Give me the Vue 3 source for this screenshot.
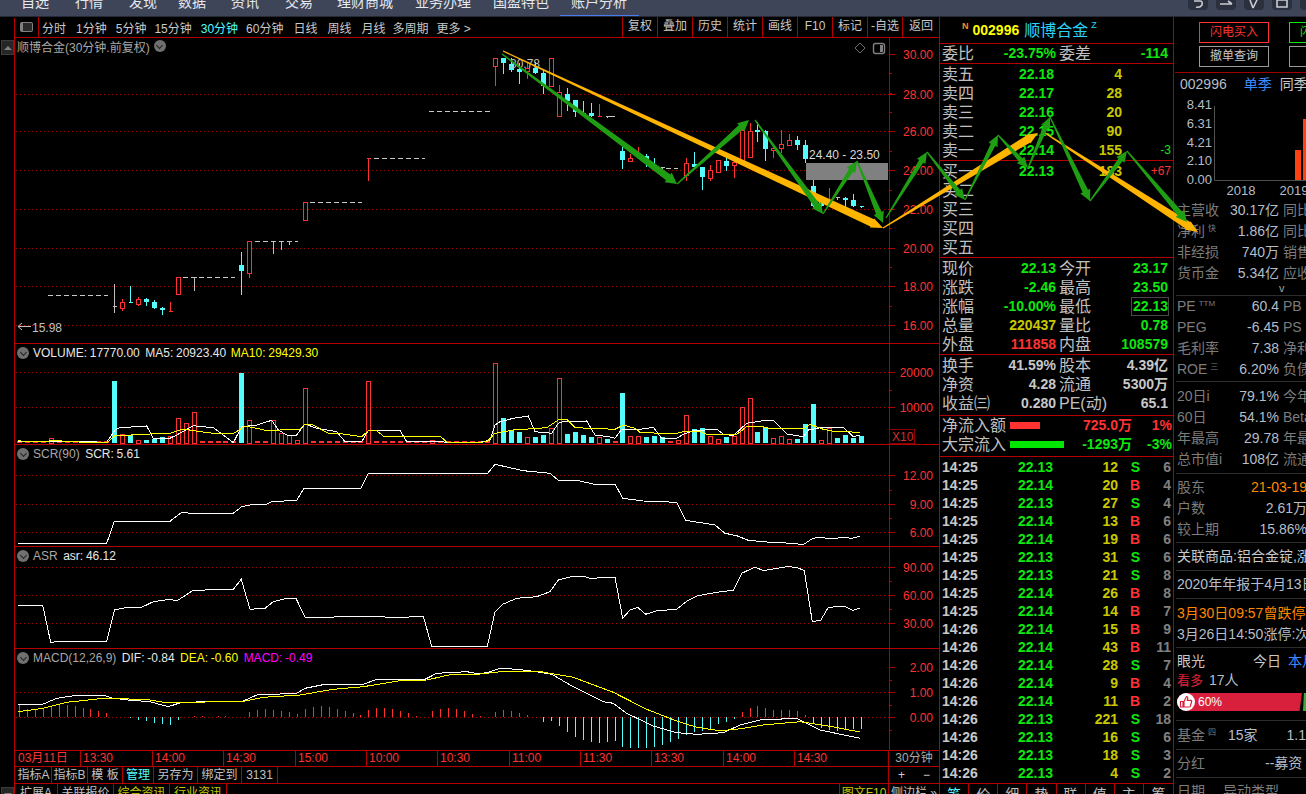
<script setup>
const DX = 7.94
const xAt = (i) => Math.round(114.3 + DX * i) + 0.5
const pts = (arr, ox, oy) => {
  let s = ''
  for (let k = 0; k < arr.length; k += 2) s += (ox + arr[k] / 3).toFixed(1) + ',' + (oy + arr[k + 1] / 3).toFixed(1) + ' '
  return s
}

const nav = [['自选',21],['行情',26],['发现',26],['数据',21],['资讯',25],['交易',26],['理财商城',24],['业务办理',22],['国盈特色',22],['账户分析',22]]
const tools = [['分时',3],['1分钟',10],['5分钟',9],['15分钟',8],['30分钟',9],['60分钟',8],['日线',10],['周线',10],['月线',10],['多周期',7],['更多 >',8]]
const toolRight = ['复权','叠加','历史','统计','画线','F10','标记','-自选','返回']

/* candles: index, type, high, low, top, bottom */
const candles = [
  [0,'g',284,312,306,306],[1,'r',299,310,302,308],[2,'c',286,302,302,302],[3,'r',297,305,299,304],[4,'c',298,305,299,302],[5,'c',300,308,302,308],[6,'c',307,314,308,310],[7,'r',302,311,311,311],
  [8,'r',277,294,277,294],[10,'g',277,290,277,277],[16,'c',252,294,265,271],[17,'r',241,277,241,273],[20,'g',241,253,241,241],[21,'g',241,249,241,241],[22,'g',241,244,241,241],[24,'r',202,220,202,220],[32,'r',158,180,158,158],
  [48,'r',58,85,58,66],[49,'c',58,73,58,63],[50,'c',58,71,64,70],[51,'c',63,83,69,72],[52,'r',63,78,68,71],[53,'c',62,73,68,73],[54,'c',70,93,73,86],[55,'r',58,86,58,86],[56,'r',85,116,92,116],[57,'c',88,110,94,101],[58,'c',100,116,100,112],[59,'c',101,115,113,113],[60,'c',103,116,113,116],[61,'r',104,116,116,116],[62,'g',116,117,116,116],
  [64,'c',147,168,151,160],[65,'r',154,161,158,161],[66,'r',147,157,157,157],[67,'c',154,166,156,159],[68,'c',158,168,167,167],[69,'g',167,168,167,167],[72,'r',158,180,163,175],[73,'c',152,167,164,167],[74,'c',167,189,167,177],[75,'r',165,180,170,178],[76,'r',160,172,160,172],[77,'c',157,170,161,166],[78,'r',162,177,162,165],[79,'r',128,160,130,160],[80,'r',123,157,131,157],[81,'c',122,141,130,132],[82,'c',130,160,131,149],[83,'r',147,157,148,150],[84,'r',130,152,144,148],[85,'r',134,145,140,145],[86,'c',136,149,140,145],[87,'c',140,162,145,159],[88,'c',180,206,186,206],[89,'c',198,206,200,206],[90,'r',188,200,200,200],[91,'g',197,199,197,197],[92,'c',197,206,198,200],[93,'c',194,206,200,206],[94,'c',206,207,206,206]
]
const candleColor = { r: '#ff3232', c: '#54fcfc', g: '#c0c0c0' }
const dashes = [[48,108,295.5],[183,235,277.5],[255,298,241.5],[310,362,202.5],[374,425,158.5],[429,490,111.5],[610,616,116.5],[666,678,168.5]]

const vol = [0,0,0,0,295,0,0,0,0,0,0,0,-123,283,-285,300,-300,-296,-291,288,235,250,217,0,0,0,0,0,-99,241,0,0,240,280,285,300,145,0,0,0,0,0,0,0,124,0,0,0,0,0,0,0,300,0,0,0,0,0,0,0,70,-235,-270,-277,292,-292,-285,264,115,-283,-277,-285,-292,290,-297,0,-160,287,289,-292,-288,-290,0,301,226,-268,-264,289,298,-291,289,202,175,-276,-262,295,289,298,-297,-253,-192,301,263,-294,-285,-294,-288]
const volBars = vol.map((v, k) => ({ x: xAt(k - 12), low: v === 0, cyan: v < 0, top: Math.round(340 + Math.abs(v) / 3) + 0.5 }))
const volW = pts([54,305,150,304,260,305,320,307,345,270,360,263,440,258,460,295,510,295,530,285,580,257,640,263,670,285,700,308,725,260,770,255,815,241,835,270,860,285,890,285,915,252,950,265,1010,275,1035,305,1085,305,1105,271,1200,271,1220,305,1330,305,1340,308,1440,308],0,340) + pts([0,307,30,300,45,255,60,245,100,235,145,228,165,275,215,280,235,250,250,245,320,243,345,285,385,290,405,295,425,268,480,268,520,262,545,295,590,295,610,283,640,272,710,268,730,282,760,287,800,250,860,240,880,241,920,282,970,290,985,270,1030,262,1090,262,1120,290,1140,285],480,340)
const volY = pts([54,300,70,305,180,302,200,305,320,308,345,287,440,283,470,280,510,280,550,267,600,275,650,281,700,281,735,258,770,265,800,272,840,270,900,268,915,253,940,255,985,280,1030,282,1085,290,1105,272,1130,272,1150,288,1320,288,1340,306,1440,308],0,340) + pts([0,307,20,305,45,280,100,270,200,263,235,240,260,238,285,263,405,268,430,255,465,265,480,277,580,282,610,275,660,275,680,283,770,283,800,260,850,260,870,266,970,267,990,253,1030,268,1060,274,1140,277],480,340)

const scr = pts([54,310,320,310,343,244,510,244,545,217,570,220,700,220,725,200,760,193,800,193,815,185,890,181,912,145,1083,145,1104,101,1440,101],0,440) + pts([0,101,22,101,45,73,130,92,210,100,235,121,290,121,340,132,405,132,428,175,490,183,590,187,617,241,705,255,735,280,770,287,805,301,870,307,940,310,970,314,995,297,1010,292,1060,296,1090,292,1115,295,1140,289],480,440)
const asr = pts([54,496,128,496,152,607,185,604,320,604,344,509,385,502,425,502,460,485,510,478,530,483,580,451,700,448,724,418,750,508,795,505,820,485,860,475,888,475,915,532,1095,530,1210,532,1270,529,1295,619,1440,619],0,440) + pts([0,619,22,619,45,515,70,492,110,475,170,470,210,455,235,420,280,409,310,409,330,415,405,412,428,535,450,510,473,502,497,523,530,512,590,508,620,484,650,468,710,457,760,451,785,400,825,381,850,392,920,380,950,382,973,392,997,545,1022,541,1045,502,1095,499,1118,511,1140,505],480,440)
const macdW = pts([54,165,130,162,170,145,235,135,310,135,340,145,385,150,450,155,505,170,545,157,730,153,770,135,890,130,915,115,975,103,1085,105,1130,88,1275,88,1310,70,1400,65,1440,72],0,650) + pts([0,72,30,65,60,55,110,58,170,65,215,73,280,110,370,155,400,160,440,190,520,228,590,248,650,253,730,248,780,225,840,210,950,205,1020,240,1140,265],480,650)
const macdY = pts([54,185,130,175,200,157,320,144,450,150,500,158,730,154,790,142,900,135,1000,118,1090,110,1200,92,1280,90,1360,72,1440,72],0,650) + pts([0,72,80,63,170,63,280,82,400,127,500,178,590,213,650,232,720,242,770,238,850,225,960,215,1040,227,1140,246],480,650)
const macd = [165,176,178,178,172,165,165,168,175,178,183,190,201,201,205,210,214,219,222,225,210,201,199,199,200,199,199,200,200,186,180,178,180,184,186,192,176,170,168,172,178,184,190,195,180,174,174,178,182,190,198,200,183,177,175,178,184,192,198,200,186,180,183,189,196,200,215,213,228,246,261,270,275,278,276,274,290,293,293,293,290,285,275,267,255,246,243,238,222,215,207,186,175,168,173,180,180,180,184,196,222,235,240,242,238,238,236]
const macdBars = macd.map((v, k) => ({ x: xAt(k - 12), y: 650 + v / 3, neg: v > 202 }))

const axisMain = [['30.00',54],['28.00',94],['26.00',131],['24.00',170],['22.00',209],['20.00',248],['18.00',286],['16.00',325]]
const gridMain = [94,131,170,209,248,286,325]
const minor = (a, b, n) => Array.from({ length: n }, (_, k) => Math.round(a + (b - a) * k / (n - 1)))

const dates = [['03月11日',66],['13:30',72],['14:00',71],['14:30',72],['15:00',71],['10:00',71],['10:30',72],['11:00',71],['11:30',71],['13:30',72],['14:00',71],['14:30',94]]
const cmds = [['指标A',36],['指标B',36],['模 板',35],['管理',31,'cy'],['另存为',44],['绑定到',44],['3131',36]]
const tabsLeft = [['扩展A',43],['关联报价',56],['综合资讯',56,'ye'],['行业资讯',57,'ye']]
const quoteTabs = ['笔','价','细','势','联','值','主','筹']

const asks = [['卖五','22.18','4'],['卖四','22.17','28'],['卖三','22.16','20'],['卖二','22.15','90'],['卖一','22.14','155','-3','gr']]
const bids = [['买一','22.13','183','+67','re'],['买二'],['买三'],['买四'],['买五']]
const stat1 = [['现价','22.13','gr','今开','23.17','gr'],['涨跌','-2.46','gr','最高','23.50','gr'],['涨幅','-10.00%','gr','最低','22.13','gr boxed'],['总量','220437','ye','量比','0.78','gr'],['外盘','111858','re','内盘','108579','gr']]
const stat2 = [['换手','41.59%','股本','4.39亿'],['净资','4.28','流通','5300万'],['收益㈢','0.280','PE(动)','65.1']]
const ticks = [['14:25','22.13',12,'S',6],['14:25','22.14',20,'B',4],['14:25','22.13',27,'S',4],['14:25','22.14',13,'B',6],['14:25','22.14',19,'B',6],['14:25','22.13',31,'S',6],['14:25','22.13',21,'S',8],['14:25','22.14',26,'B',8],['14:25','22.14',14,'B',7],['14:26','22.14',15,'B',9],['14:26','22.14',43,'B',11],['14:26','22.14',28,'S',7],['14:26','22.14',9,'B',4],['14:26','22.14',11,'B',2],['14:26','22.13',221,'S',18],['14:26','22.13',16,'S',6],['14:26','22.13',18,'S',3],['14:26','22.13',4,'S',2]]

const fin1 = [['主营收','','30.17亿','同比'],['净利','快','1.86亿','同比'],['非经损','','740万','销售'],['货币金','','5.34亿','应收']]
const fin2 = [['PE','TTM','60.4','PB'],['PEG','','-6.45','PS'],['毛利率','','7.38','净利'],['ROE','三','6.20%','负债']]
const fin3 = [['20日i','','79.1%','今年'],['60日','','54.1%','Beta'],['年最高','','29.78','年最'],['总市值i','','108亿','流通']]

const headW = (x1, y1, x2, y2, w, L = 11, b = 2.5) => {
  const len = Math.hypot(x2 - x1, y2 - y1), ux = (x2 - x1) / len, uy = (y2 - y1) / len, nx = -uy, ny = ux
  const nk = [x2 - ux * L, y2 - uy * L]
  const p = (c, s) => (c[0] + nx * s).toFixed(1) + ',' + (c[1] + ny * s).toFixed(1)
  return [p([x1, y1], 0.6), p(nk, w / 2), p(nk, w / 2 + b), x2.toFixed(1) + ',' + y2.toFixed(1), p(nk, -w / 2 - b), p(nk, -w / 2), p([x1, y1], -0.6)].join(' ')
}
const yellowArrows = [[503,51,883,228,8],[883,228,1038,133,8],[1045,133,1198,232,8]].map((a) => headW(...a, 12, 1))
const greenArrows = [[502,54,677,184,7],[677,184,749,120,6],[755,120,823,214,6],[823,214,857,161,5],[857,161,883,223,6],[886,218,927,152,5],[927,152,965,200,5],[965,200,998,135,5],[998,135,1028,168,5],[1028,168,1050,117,5],[1050,117,1090,201,6],[1090,201,1127,151,5],[1127,151,1187,222,6]].map((a) => headW(...a))
</script>

<template>
  <div class="app">
    <header class="topbar">
      <nav class="nav">
        <span v-for="(n, k) in nav" :key="k" class="nav-item" :class="{ active: k === 9 }" :style="{ marginLeft: n[1] + 'px' }">{{ n[0] }}</span>
      </nav>
      <div class="win-icons">
        <span class="win-btn"><svg width="14" height="10" viewBox="0 0 14 10"><path d="M3 1 H9 Q12 1 11 5 Q9 8 5 7" fill="none" stroke="#c8ccd4" stroke-width="1.6"/></svg></span>
        <span class="win-btn"><svg width="14" height="10" viewBox="0 0 14 10"><path d="M1 4 H13 M9 1 L13 4" fill="none" stroke="#c8ccd4" stroke-width="1.6"/></svg></span>
        <span class="win-btn"><svg width="14" height="10" viewBox="0 0 14 10"><path d="M3 0 L6 8 M10 0 L6 8" fill="none" stroke="#c8ccd4" stroke-width="1.6"/></svg></span>
        <span class="win-btn"><svg width="14" height="10" viewBox="0 0 14 10"><path d="M2 0 H12 V7 H2 Z" fill="none" stroke="#c8ccd4" stroke-width="1.6"/></svg></span>
        <span class="win-btn"></span>
      </div>
    </header>

    <main class="main">
      <section class="chartcol">
        <aside class="rail">
          <span class="rail-btn"><i class="tri up"></i></span>
          <span class="rail-btn"><i class="tri down"></i></span>
        </aside>
        <div class="work">
          <div class="tools">
            <span class="toggle"><i></i></span>
            <span v-for="(t, k) in tools" :key="k" class="tool" :class="{ on: k === 4 }" :style="{ marginLeft: t[1] + 'px' }">{{ t[0] }}</span>
            <div class="tool-right">
              <span v-for="t in toolRight" :key="t">{{ t }}</span>
            </div>
          </div>

          <div class="pane p-main">
            <div class="legend main-legend"><span class="grey">顺博合金(30分钟.前复权)</span><i class="chev"></i></div>
            <svg class="plot" width="924" height="305" viewBox="15 38 924 305">
              <g class="crisp">
                <line v-for="y in gridMain" :key="y" x1="16" x2="889" :y1="y + .5" :y2="y + .5" class="dot"/>
                <line x1="889.5" x2="889.5" y1="38" y2="343" class="red"/>
                <line v-for="y in minor(54, 325, 15)" :key="y" x1="889" x2="892" :y1="y + .5" :y2="y + .5" class="red"/>
                <line v-for="a in axisMain" :key="a[0]" x1="889" x2="895" :y1="a[1] + .5" :y2="a[1] + .5" class="red"/>
                <line v-for="(d, k) in dashes" :key="k" :x1="d[0]" :x2="d[1]" :y1="d[2]" :y2="d[2]" class="dash"/>
                <g v-for="(c, k) in candles" :key="k">
                  <line :x1="xAt(c[0])" :x2="xAt(c[0])" :y1="c[2]" :y2="c[3] + 1" :stroke="candleColor[c[1]]"/>
                  <line v-if="c[4] === c[5]" :x1="xAt(c[0]) - 2" :x2="xAt(c[0]) + 2.5" :y1="c[4] + .5" :y2="c[4] + .5" :stroke="candleColor[c[1]]"/>
                  <rect v-else-if="c[1] === 'c'" :x="xAt(c[0]) - 2.5" :y="c[4]" width="5" :height="c[5] - c[4]" fill="#54fcfc"/>
                  <rect v-else :x="xAt(c[0]) - 2" :y="c[4] + .5" width="4" :height="c[5] - c[4]" fill="#000" stroke="#ff3232"/>
                </g>
                <rect x="806" y="163" width="82" height="17" fill="#808080"/>
              </g>
              <text x="809" y="159" class="t-note">24.40 - 23.50</text>
              <text x="510" y="68" class="t-dim">30.78</text>
              <path d="M31 326.5 H18 M22 323 L18 326.5 L22 330" fill="none" stroke="#c0c0c0"/>
              <text x="32" y="332" class="t-dim">15.98</text>
              <path d="M860 43 L865 48 L860 53 L855 48 Z" fill="none" stroke="#707070"/>
              <rect x="873.5" y="43.5" width="11" height="10" rx="2" fill="none" stroke="#808080" stroke-width="1.4"/>
              <rect x="880" y="45" width="3" height="7" fill="#808080"/>
              <text v-for="a in axisMain" :key="a[0]" x="933" :y="a[1] + 4.5" class="t-axis">{{ a[0] }}</text>
            </svg>
          </div>

          <div class="pane p-vol">
            <div class="legend"><i class="chev"></i><span class="white">VOLUME: 17770.00&nbsp; MA5: 20923.40&nbsp;</span><span class="yel ma10">MA10: 29429.30</span></div>
            <svg class="plot" width="924" height="100" viewBox="15 344 924 100">
              <g class="crisp">
                <line v-for="y in [372, 407]" :key="y" x1="16" x2="889" :y1="y + .5" :y2="y + .5" class="dot"/>
                <line x1="889.5" x2="889.5" y1="344" y2="444" class="red"/>
                <line v-for="y in [372, 407]" :key="'t' + y" x1="889" x2="895" :y1="y + .5" :y2="y + .5" class="red"/>
                <line x1="889" x2="892" y1="390.5" y2="390.5" class="red"/>
                <rect x="889.5" y="429.5" width="25" height="14" fill="none" stroke="#8a0000"/>
                <template v-for="(b, k) in volBars" :key="k">
                  <rect v-if="b.low" :x="b.x - 2.5" y="441" width="5" height="2" fill="#ff3232"/>
                  <rect v-else-if="b.cyan" :x="b.x - 2.5" :y="b.top - .5" width="5" :height="443 - b.top" fill="#54fcfc"/>
                  <rect v-else :x="b.x - 2" :y="b.top" width="4" :height="443 - b.top" fill="#000" stroke="#ff3232"/>
                </template>
              </g>
              <polyline :points="volW" class="ln-w"/>
              <polyline :points="volY" class="ln-y"/>
              <text x="933" y="377" class="t-axis">20000</text>
              <text x="933" y="412" class="t-axis">10000</text>
              <text x="892" y="441" class="t-x10">X10</text>
            </svg>
          </div>

          <div class="pane p-ind">
            <div class="legend"><i class="chev"></i><span class="grey">SCR(90)&nbsp; </span><span class="white">SCR: 5.61</span></div>
            <svg class="plot" width="924" height="101" viewBox="15 445 924 101">
              <g class="crisp">
                <line v-for="y in [475, 504, 532]" :key="y" x1="16" x2="889" :y1="y + .5" :y2="y + .5" class="dot"/>
                <line x1="889.5" x2="889.5" y1="445" y2="546" class="red"/>
                <line v-for="y in [475, 504, 532]" :key="'t' + y" x1="889" x2="895" :y1="y + .5" :y2="y + .5" class="red"/>
                <line v-for="y in [490, 518]" :key="'m' + y" x1="889" x2="892" :y1="y + .5" :y2="y + .5" class="red"/>
              </g>
              <polyline :points="scr" class="ln-w"/>
              <text x="933" y="480" class="t-axis">12.00</text>
              <text x="933" y="509" class="t-axis">9.00</text>
              <text x="933" y="537" class="t-axis">6.00</text>
            </svg>
          </div>

          <div class="pane p-ind">
            <div class="legend"><i class="chev"></i><span class="grey">ASR&nbsp; </span><span class="white">asr: 46.12</span></div>
            <svg class="plot" width="924" height="101" viewBox="15 547 924 101">
              <g class="crisp">
                <line v-for="y in [567, 595, 623]" :key="y" x1="16" x2="889" :y1="y + .5" :y2="y + .5" class="dot"/>
                <line x1="889.5" x2="889.5" y1="547" y2="648" class="red"/>
                <line v-for="y in [567, 595, 623]" :key="'t' + y" x1="889" x2="895" :y1="y + .5" :y2="y + .5" class="red"/>
                <line v-for="y in [581, 609]" :key="'m' + y" x1="889" x2="892" :y1="y + .5" :y2="y + .5" class="red"/>
              </g>
              <polyline :points="asr" class="ln-w"/>
              <text x="933" y="572" class="t-axis">90.00</text>
              <text x="933" y="600" class="t-axis">60.00</text>
              <text x="933" y="628" class="t-axis">30.00</text>
            </svg>
          </div>

          <div class="pane p-ind">
            <div class="legend"><i class="chev"></i><span class="grey">MACD(12,26,9)&nbsp; </span><span class="white">DIF: -0.84&nbsp; </span><span class="yel">DEA: -0.60&nbsp; </span><span class="mag">MACD: -0.49</span></div>
            <svg class="plot" width="924" height="101" viewBox="15 649 924 101">
              <g class="crisp">
                <line v-for="y in [692, 717]" :key="y" x1="16" x2="889" :y1="y + .5" :y2="y + .5" class="dot"/>
                <line x1="889.5" x2="889.5" y1="649" y2="750" class="red"/>
                <line v-for="y in [667, 692, 717]" :key="'t' + y" x1="889" x2="895" :y1="y + .5" :y2="y + .5" class="red"/>
                <line v-for="y in [680, 705, 730]" :key="'m' + y" x1="889" x2="892" :y1="y + .5" :y2="y + .5" class="red"/>
                <line v-for="(b, k) in macdBars" :key="k" :x1="b.x" :x2="b.x" y1="717" :y2="b.y" :stroke="b.neg ? '#54fcfc' : '#ff3232'"/>
              </g>
              <polyline :points="macdW" class="ln-w"/>
              <polyline :points="macdY" class="ln-y"/>
              <text x="933" y="672" class="t-axis">2.00</text>
              <text x="933" y="697" class="t-axis">1.00</text>
              <text x="933" y="722" class="t-axis">0.00</text>
            </svg>
          </div>

          <div class="dates">
            <span v-for="(d, k) in dates" :key="k" class="date" :style="{ width: d[1] + 'px' }">{{ d[0] }}</span>
            <span class="period">30分钟</span>
          </div>
          <div class="cmds">
            <span v-for="(c, k) in cmds" :key="k" class="cmd" :class="c[2]" :style="{ width: c[1] + 'px' }">{{ c[0] }}</span>
            <span class="grow"></span>
            <span class="pm">+</span><span class="pm">−</span>
          </div>
          <div class="tabs">
            <span v-for="(c, k) in tabsLeft" :key="k" class="tab" :class="c[2]" :style="{ width: c[1] + 'px' }">{{ c[0] }}</span>
            <span class="grow"></span>
            <span class="tab ye tf10">图文F10</span>
            <span class="tab tside">侧边栏 »</span>
          </div>
        </div>
      </section>

      <section class="quote">
        <div class="q-head">
          <span class="q-n">N</span><span class="q-code">002996</span><span class="q-name">顺博合金</span><span class="q-z">Z</span>
        </div>
        <div class="q-wei two">
          <div class="half"><span>委比</span><b class="gr">-23.75%</b></div>
          <div class="half"><span>委差</span><b class="gr">-114</b></div>
        </div>
        <div class="book asks">
          <div v-for="r in asks" :key="r[0]" class="book-row">
            <span>{{ r[0] }}</span><b class="gr">{{ r[1] }}</b><b class="ye">{{ r[2] }}</b><em :class="r[4]">{{ r[3] }}</em>
          </div>
        </div>
        <div class="book bids">
          <div v-for="r in bids" :key="r[0]" class="book-row">
            <span>{{ r[0] }}</span><b class="gr">{{ r[1] }}</b><b class="ye">{{ r[2] }}</b><em :class="r[4]">{{ r[3] }}</em>
          </div>
        </div>
        <div class="block b5">
          <div v-for="r in stat1" :key="r[0]" class="two">
            <div class="half"><span>{{ r[0] }}</span><b :class="r[2]">{{ r[1] }}</b></div>
            <div class="half"><span>{{ r[3] }}</span><b :class="r[5]">{{ r[4] }}</b></div>
          </div>
        </div>
        <div class="block b3">
          <div v-for="r in stat2" :key="r[0]" class="two">
            <div class="half"><span>{{ r[0] }}</span><b class="lt">{{ r[1] }}</b></div>
            <div class="half"><span>{{ r[2] }}</span><b class="lt">{{ r[3] }}</b></div>
          </div>
        </div>
        <div class="block b2">
          <div class="flow"><span class="fl">净流入额</span><i class="fbar fr"></i><b class="re fv">725.0万</b><b class="re fp">1%</b></div>
          <div class="flow"><span class="fl">大宗流入</span><i class="fbar fg"></i><b class="gr fv">-1293万</b><b class="gr fp">-3%</b></div>
        </div>
        <div class="tick-list">
          <div v-for="(t, k) in ticks" :key="k" class="tick">
            <b class="lt">{{ t[0] }}</b><b class="gr">{{ t[1] }}</b><b class="ye">{{ t[2] }}</b><b class="bs" :class="t[3] === 'B' ? 're' : 'gr'">{{ t[3] }}</b><b class="cnt">{{ t[4] }}</b>
          </div>
        </div>
        <div class="q-tabs">
          <span v-for="(t, k) in quoteTabs" :key="t" :class="{ cy: k === 0 }">{{ t }}</span>
        </div>
      </section>

      <section class="side">
        <div class="s-btns">
          <div class="btn-row"><span class="bt br">闪电买入</span><span class="bt bg">闪电卖出</span></div>
          <div class="btn-row"><span class="bt bw">撤单查询</span><span class="bt bw">条件单</span></div>
        </div>
        <div class="s-code"><span class="val">002996</span><span class="blue">单季</span><span class="wh">同季</span></div>
        <svg class="bar-chart" width="132" height="104" viewBox="1174 94 132 104">
          <text v-for="l in [['8.41',109],['6.31',128],['4.21',147],['2.10',165],['0.00',184]]" :key="l[0]" x="1212" :y="l[1]" class="t-val">{{ l[0] }}</text>
          <path d="M1214.5 106 V180.5 H1306" fill="none" stroke="#505050"/>
          <rect x="1295" y="150" width="6" height="30" fill="#ff4010"/>
          <rect x="1303" y="119" width="6" height="61" fill="#ff4010"/>
          <text x="1241" y="195" class="t-val mid">2018</text>
          <text x="1294" y="195" class="t-val mid">2019</text>
        </svg>
        <div class="fin f1">
          <div v-for="r in fin1" :key="r[0]" class="fin-row"><div class="fin-l"><span class="lab">{{ r[0] }}<sup v-if="r[1]">{{ r[1] }}</sup></span><span class="val">{{ r[2] }}</span></div><span class="lab">{{ r[3] }}</span></div>
          <div class="more">v</div>
        </div>
        <div class="fin f2 ruled">
          <div v-for="r in fin2" :key="r[0]" class="fin-row"><div class="fin-l"><span class="lab">{{ r[0] }}<sup v-if="r[1]">{{ r[1] }}</sup></span><span class="val">{{ r[2] }}</span></div><span class="lab">{{ r[3] }}</span></div>
        </div>
        <div class="fin f3 ruled">
          <div v-for="r in fin3" :key="r[0]" class="fin-row"><div class="fin-l"><span class="lab">{{ r[0] }}</span><span class="val">{{ r[2] }}</span></div><span class="lab">{{ r[3] }}</span></div>
        </div>
        <div class="fin f4 ruled">
          <div class="fin-row"><div class="fin-l wide"><span class="lab">股东</span><span class="org">21-03-19</span></div></div>
          <div class="fin-row"><div class="fin-l wide"><span class="lab">户数</span><span class="val">2.61万</span></div></div>
          <div class="fin-row"><div class="fin-l wide"><span class="lab">较上期</span><span class="val">15.86%</span></div></div>
        </div>
        <div class="line-row ruled h28"><span class="wh">关联商品:铝合金锭,涨</span></div>
        <div class="line-row ruled h28"><span class="val">2020年年报于4月13日</span></div>
        <div class="events ruled">
          <div class="org">3月30日09:57曾跌停</div>
          <div class="val">3月26日14:50涨停:次</div>
        </div>
        <div class="eyes ruled">
          <div class="eye-top"><span class="wh">眼光</span><span class="wh today">今日</span><span class="blue">本月</span></div>
          <div class="eye-mid"><span class="crim">看多</span><span class="val">17人</span></div>
          <div class="pill">
            <div class="pill-red">
              <span class="thumb"><svg width="14" height="14" viewBox="0 0 14 14"><path d="M1.5 6.5 H4 V12 H1.5 Z M5 6.5 L7.5 1.5 Q9 1.5 8.7 3.5 L8.3 5.3 H12 Q13 5.5 12.5 7 L11.3 11.5 Q11 12 10 12 H5 Z" fill="none" stroke="#d8203c" stroke-width="1.2"/></svg></span>
              <span>60%</span>
            </div>
            <div class="pill-green"></div>
          </div>
        </div>
        <div class="line-row ruled h29"><span class="lab">基金<sup>四</sup></span><span class="val fund">15家</span><span class="val fund2">1.1%</span></div>
        <div class="line-row ruled h28"><span class="lab">分红</span><span class="val bonus">--募资</span></div>
        <div class="line-row ruled h28"><span class="lab">日期</span><span class="lab type">异动类型</span></div>
      </section>
    </main>

    <svg class="overlay" width="1306" height="794" viewBox="0 0 1306 794">
      <polygon v-for="(p, k) in yellowArrows" :key="'y' + k" :points="p" fill="#ffb400"/>
      <polygon v-for="(p, k) in greenArrows" :key="'g' + k" :points="p" fill="#1f9e14"/>
    </svg>
  </div>
</template>

<style>
html, body { margin: 0; background: #000; }
</style>

<style scoped>
.app {
  position: relative;
  display: flex;
  flex-direction: column;
  width: 1306px;
  height: 794px;
  overflow: hidden;
  background: #000;
  font-family: "Liberation Sans", "Noto Sans CJK SC", sans-serif;
  color: #c0c0c0;
}
b { font-weight: 700; }
em { font-style: normal; }
.gr { color: #0fe60f; }
.ye { color: #c8c800; }
.re { color: #ff3232; }
.lt { color: #c8c8c8; }
.cy { color: #54fcfc; }
.boxed { padding: 0 1px 0 2px; margin-right: -1px; box-shadow: inset 0 0 0 1px #484848; }

.topbar { flex: none; display: flex; justify-content: space-between; height: 16px; background: #3e4558; border-bottom: 1px solid #262a36; overflow: hidden; }
.nav { display: flex; height: 16px; }
.nav-item { position: relative; flex: none; margin-top: -6px; height: 22px; line-height: 16px; font-size: 14px; color: #e4e8f0; }
.nav-item.active::after { content: ""; position: absolute; left: -11px; right: -12px; top: 21px; height: 1px; background: #4a7cf0; }
.win-icons { display: flex; gap: 8px; margin-right: -14px; }
.win-btn { width: 20px; height: 10px; background: #2b303e; border-radius: 0 0 4px 4px; display: flex; justify-content: center; }

.main { flex: 1; display: flex; min-height: 0; }
.chartcol { flex: none; width: 939px; display: flex; border-right: 1px solid #b40000; }
.rail { flex: none; width: 15px; height: 784px; box-sizing: border-box; border-right: 1px solid #b40000; display: flex; flex-direction: column; justify-content: space-between; padding: 22px 0 0 1px; margin-top: 1px; }
.rail-btn { display: flex; align-items: center; justify-content: center; width: 11px; height: 13px; background: #262626; border: 1px solid #3c3c3c; }
.tri { width: 0; height: 0; border-left: 4px solid transparent; border-right: 4px solid transparent; }
.tri.up { border-bottom: 4px solid #808080; }
.tri.down { border-top: 4px solid #808080; }
.work { flex: none; width: 924px; display: flex; flex-direction: column; }

.tools { flex: none; position: relative; display: flex; align-items: center; height: 20px; border-bottom: 1px solid #b40000; font-size: 12px; color: #c8c8c8; }
.toggle { flex: none; display: flex; align-items: center; justify-content: center; width: 23px; height: 100%; border-right: 1px solid #b40000; }
.toggle i { display: block; width: 9px; height: 8px; border: 1px solid #808080; border-left-width: 3px; border-radius: 2px; background: #2a2a2a; }
.tool { flex: none; white-space: nowrap; }
.tool.on { color: #54fcfc; }
.tool-right { margin-left: auto; display: flex; height: 100%; }
.tool-right span { width: 35px; box-sizing: border-box; border-left: 1px solid #b40000; text-align: center; line-height: 19px; }
.tool-right span:last-child { width: 37px; }

.pane { position: relative; flex: none; border-bottom: 1px solid #b40000; }
.p-main { height: 305px; }
.p-vol { height: 100px; }
.p-ind { height: 101px; }
.plot { display: block; }
.crisp { shape-rendering: crispEdges; }
.dot { stroke: #a80000; stroke-dasharray: 1 3; }
.red { stroke: #b40000; }
.dash { stroke: #c8c8c8; stroke-dasharray: 5 3; }
.ln-w { fill: none; stroke: #fff; stroke-width: 1; shape-rendering: crispEdges; }
.ln-y { fill: none; stroke: #ffff00; stroke-width: 1; shape-rendering: crispEdges; }
text { font-family: "Liberation Sans", "Noto Sans CJK SC", sans-serif; }
.t-axis { font-size: 12px; fill: #ff3232; text-anchor: end; }
.t-x10 { font-size: 12px; fill: #d03030; }
.t-note { font-size: 12px; fill: #d8d8d8; }
.t-dim { font-size: 12px; fill: #c0c0c0; }
.t-val { font-size: 13px; fill: #b4bcc8; text-anchor: end; }
.t-val.mid { text-anchor: middle; }

.legend { position: absolute; left: 2px; top: 2px; display: flex; align-items: center; height: 14px; font-size: 12px; white-space: pre; word-spacing: -0.6px; z-index: 1; }
.main-legend { top: 1px; }
.grey { color: #a8a8a8; }
.white { color: #e8e8e8; }
.yel { color: #ffff00; }
.ma10 { margin-left: 2px; }
.mag { color: #ff00ff; }
.chev { position: relative; flex: none; width: 12px; height: 12px; border-radius: 50%; background: #707070; margin-right: 4px; }
.main-legend .chev { margin: 0 0 0 4px; }
.chev::after { content: ""; position: absolute; left: 3.5px; top: 2.5px; width: 4px; height: 4px; border-right: 1.4px solid #222; border-bottom: 1.4px solid #222; transform: rotate(45deg); }

.dates { flex: none; display: flex; height: 15px; border-bottom: 1px solid #b40000; font-size: 12px; line-height: 15px; color: #ff3232; }
.date { flex: none; box-sizing: border-box; border-right: 1px solid #b40000; padding-left: 2px; }
.date:first-child { padding-left: 3px; }
.period { flex: 1; text-align: center; color: #a8a8a8; }
.cmds { flex: none; display: flex; height: 16px; padding-left: 1px; border-bottom: 1px solid #b40000; font-size: 12px; line-height: 16px; color: #c0c0c0; }
.cmd { flex: none; box-sizing: border-box; border-right: 1px solid #b40000; text-align: center; white-space: nowrap; }
.cmd.cy { color: #54fcfc; }
.grow { flex: 1; border-right: 1px solid #b40000; }
.pm { flex: none; width: 25px; text-align: center; box-sizing: border-box; color: #d0d0d0; }
.pm:first-of-type { border-right: 1px solid #b40000; }
.tabs { flex: none; display: flex; height: 10px; overflow: hidden; font-size: 12px; line-height: 18px; color: #c0c0c0; }
.tab { flex: none; box-sizing: border-box; border-right: 1px solid #b40000; text-align: center; white-space: nowrap; }
.tab.ye { color: #c8c800; }
.tf10 { width: 49px; }
.tside { width: 50px; border-right: none; }

.quote { flex: none; width: 233px; display: flex; flex-direction: column; border-right: 1px solid #b40000; font-size: 16px; line-height: 19px; }
.q-head { flex: none; display: flex; height: 26px; border-bottom: 1px solid #b40000; align-items: center; padding-left: 22px; }
.q-n { font-size: 9px; font-weight: 700; color: #ff8a28; margin-top: -8px; }
.q-code { font-size: 14px; font-weight: 700; color: #ffff00; margin-left: 4px; }
.q-name { color: #2ad4f8; margin-left: 5px; }
.q-z { font-size: 9px; color: #2ad4f8; margin: -10px 0 0 3px; }
.two { display: grid; grid-template-columns: 116px 116px; height: 19px; white-space: nowrap; }
.half { display: flex; justify-content: space-between; padding-left: 2px; }
.half + .half { padding-left: 3px; padding-right: 1px; width: 113px; box-sizing: border-box; }
.half b { font-size: 14px; }
.q-wei { flex: none; height: 19px; border-bottom: 1px solid #b40000; }
.book { flex: none; border-bottom: 1px solid #b40000; }
.asks { height: 97px; padding-top: 1px; box-sizing: border-box; }
.bids { height: 95px; padding-top: 1px; }
.book-row { display: grid; grid-template-columns: 40px 72px 68px 49px; height: 19px; padding-left: 2px; white-space: nowrap; }
.book-row b { font-size: 14px; text-align: right; }
.book-row em { font-size: 12px; text-align: right; font-weight: 400; }
.block { flex: none; border-bottom: 1px solid #b40000; }
.b5 { height: 95px; padding-top: 1px; }
.b3 { height: 59px; padding-top: 1px; }
.b2 { height: 40px; }
.flow { position: relative; display: flex; align-items: center; height: 19px; padding-left: 2px; }
.fl { flex: none; width: 68px; white-space: nowrap; }
.fbar { flex: none; height: 7px; }
.fr { width: 30px; background: #ff3232; }
.fg { width: 54px; background: #00e600; }
.flow b { font-size: 14px; }
.fv { position: absolute; right: 41px; }
.fp { position: absolute; right: 1px; }
.tick-list { flex: none; height: 327px; padding-top: 1px; box-sizing: border-box; border-bottom: 1px solid #b40000; }
.tick { display: grid; grid-template-columns: 40px 71px 65px 22px 31px; height: 18px; line-height: 18px; padding-left: 2px; font-size: 14px; }
.tick b { text-align: right; }
.tick b:first-child { text-align: left; }
.tick .cnt { color: #808080; }
.q-tabs { flex: 1; display: grid; grid-template-columns: repeat(8, 1fr); overflow: hidden; font-size: 14px; line-height: 20px; text-align: center; }
.q-tabs span { border-right: 1px solid #b40000; color: #c0c0c0; }
.q-tabs span.cy { color: #54fcfc; }
.q-tabs span:last-child { border-right: 0; }

.side { flex: 1; min-width: 0; overflow: hidden; font-size: 14px; line-height: 21px; white-space: nowrap; }
.val { color: #b4bec9; }
.lab { color: #7c7c7c; }
.wh { color: #c8c8c8; }
.blue { color: #3c8cff; }
.org { color: #ff8a00; }
.crim { color: #e0203c; }
sup { font-size: 8px; line-height: 0; margin-left: 3px; vertical-align: 5px; }
.s-btns { height: 56px; box-sizing: border-box; border-bottom: 1px solid #a00000; margin-left: 1px; padding: 5px 0 0 24px; }
.btn-row { display: flex; gap: 20px; height: 24px; }
.bt { flex: none; width: 70px; height: 21px; box-sizing: border-box; border: 1px solid; text-align: center; font-size: 12px; line-height: 19px; }
.br { color: #ff3232; border-color: #ff3232; }
.bg { color: #0fe60f; border-color: #0fe60f; }
.bw { color: #c8c8c8; border-color: #9a9a9a; }
.s-code { display: flex; height: 21px; padding-left: 6px; line-height: 22px; }
.s-code .blue { margin-left: 17px; }
.s-code .wh { margin-left: 8px; }
.bar-chart { display: block; }
.fin { padding-left: 3px; }
.f1 { height: 95px; margin-top: 2px; box-sizing: border-box; }
.fin-row { display: flex; height: 21px; gap: 4px; }
.fin-l { flex: none; display: flex; justify-content: space-between; width: 102px; }
.fin-l.wide { width: 130px; }
.more { height: 11px; padding-left: 102px; line-height: 8px; font-size: 11px; color: #9aa; }
.ruled { border-top: 1px solid #2c2c2c; margin-left: 2px; padding-left: 1px; }
.f2 { height: 86px; box-sizing: border-box; }
.f3 { height: 92px; padding-top: 4px; box-sizing: border-box; }
.f4 { height: 69px; padding-top: 3px; box-sizing: border-box; }
.line-row { display: flex; align-items: center; height: 28px; box-sizing: border-box; }
.h29 { height: 29px; }
.fund { margin-left: 12px; }
.fund2 { margin-left: 29px; }
.bonus { margin-left: 60px; }
.type { margin-left: 18px; }
.events { height: 49px; padding-top: 4px; box-sizing: border-box; }
.eyes { height: 73px; box-sizing: border-box; }
.eye-top { display: flex; height: 24px; line-height: 27px; }
.today { margin-left: 48px; }
.eye-top .blue { margin-left: 7px; }
.eye-mid { display: flex; height: 21px; line-height: 17px; gap: 6px; }
.eye-mid .crim { font-size: 13px; }
.pill { display: flex; gap: 1px; height: 18px; }
.pill-red { flex: none; display: flex; align-items: center; gap: 3px; width: 125px; height: 18px; border-radius: 9px 0 0 9px; background: #d8203c; color: #fff; font-size: 12px; line-height: 18px; clip-path: polygon(0 0, 100% 0, 98% 100%, 0 100%); }
.thumb { flex: none; display: flex; align-items: center; justify-content: center; width: 18px; height: 18px; border-radius: 50%; background: #fff; }
.pill-green { flex: 1; background: #3ca83c; clip-path: polygon(30% 0, 100% 0, 100% 100%, 0 100%); }

.overlay { position: absolute; left: 0; top: 0; pointer-events: none; z-index: 5; }
</style>
